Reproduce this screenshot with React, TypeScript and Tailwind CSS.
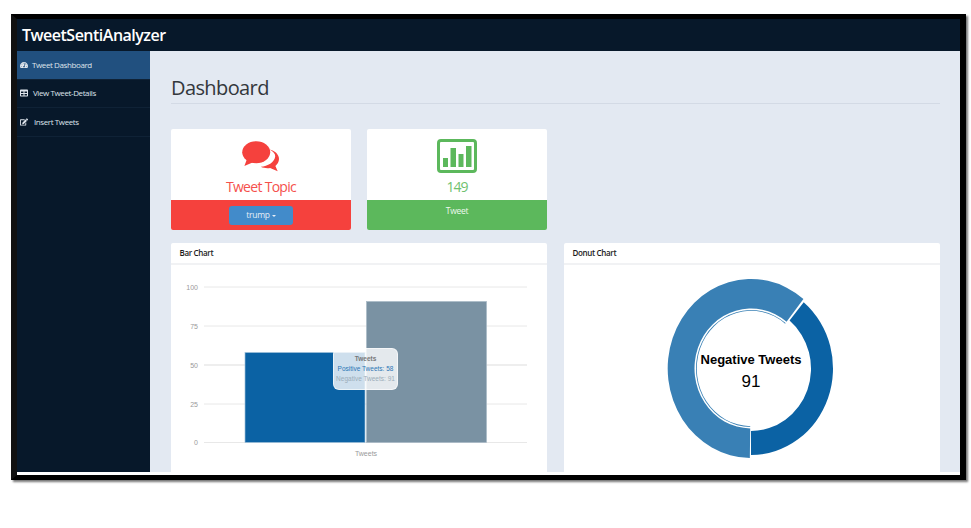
import { FaTachometerAlt, FaTable, FaEdit } from "react-icons/fa";
import { ReactNode } from "react";

// ring segment on an ellipse, angles in degrees clockwise from 12 o'clock
function pt(cx: number, cy: number, rx: number, ry: number, deg: number) {
  const a = (deg * Math.PI) / 180;
  return `${(cx + rx * Math.sin(a)).toFixed(2)} ${(cy - ry * Math.cos(a)).toFixed(2)}`;
}

function ringPath(rxO: number, ryO: number, rxI: number, ryI: number, from: number, to: number) {
  const large = to - from > 180 ? 1 : 0;
  return `M${pt(187, 103.5, rxO, ryO, from)} A${rxO} ${ryO} 0 ${large} 1 ${pt(187, 103.5, rxO, ryO, to)} L${pt(187, 103.5, rxI, ryI, to)} A${rxI} ${ryI} 0 ${large} 0 ${pt(187, 103.5, rxI, ryI, from)} Z`;
}

function NavItem({ icon, label, active, gap }: { icon: ReactNode; label: string; active?: boolean; gap: string }) {
  return (
    <div className={`flex h-[28.5px] items-center border-b border-[#0f2236] pl-[2px] text-[8px] tracking-[-0.4px] text-[#dde3ea] ${gap} ${active ? "bg-[#21507f]" : ""}`}>
      <span className="flex w-[9px] justify-center text-[8px] text-[#dfe5ec]">{icon}</span>
      {label}
    </div>
  );
}

function ChartCard({ title, children }: { title: string; children: ReactNode }) {
  return (
    <div className="h-[229px] w-[376px] overflow-hidden rounded-t-[2px] bg-white">
      <div className="flex h-[22px] items-center border-b-2 border-[#f1f2f4] pl-[8.5px] text-[8px] font-semibold tracking-[-0.35px] text-[#1b1b1b]">
        {title}
      </div>
      {children}
    </div>
  );
}

function BarChart() {
  const rows = [
    { y: 22, label: "100" },
    { y: 61, label: "75" },
    { y: 100, label: "50" },
    { y: 139, label: "25" },
    { y: 177.5, label: "0" },
  ];
  return (
    <div className="relative">
      <svg width="376" height="206" className="block font-['Liberation_Sans',sans-serif]">
        {rows.map((r) => (
          <g key={r.label}>
            <line x1="33" x2="356" y1={r.y} y2={r.y} stroke="#e8e8e8" strokeWidth={r.label === "50" ? 1.6 : 1} />
            <text x="27" y={r.y + 2.5} textAnchor="end" fontSize="7" fill="#9a9a9a">{r.label}</text>
          </g>
        ))}
        <rect x="74" y="87.5" width="120" height="90" fill="#0b62a4" stroke="#9fc0da" strokeWidth="0.7" />
        <rect x="195.5" y="36.5" width="120" height="141" fill="#7a92a3" stroke="#a9bac6" strokeWidth="0.7" />
        <text x="195" y="191" textAnchor="middle" fontSize="7" fill="#9a9a9a">Tweets</text>
      </svg>
      <div className="absolute left-[162px] top-[83px] flex h-[42px] w-[65px] flex-col items-center rounded-[6px] border border-white/60 bg-white/80 pt-[5px] font-['Liberation_Sans',sans-serif] text-[6.5px] leading-[10px]">
        <span className="font-bold text-[#777]">Tweets</span>
        <span className="text-[#2b76b5]">Positive Tweets: 58</span>
        <span className="text-[#9badb9]">Negative Tweets: 91</span>
      </div>
    </div>
  );
}

function DonutChart() {
  return (
    <div className="relative">
      <svg width="376" height="206" className="block">
        <path d={ringPath(82, 86.5, 60, 62.5, 40, 180)} fill="#0b62a4" />
        <path d={ringPath(83.3, 89.5, 56.5, 60, 180.8, 399)} fill="#3980b5" />
        <path d={ringPath(55, 58.5, 54.2, 57.7, 180.8, 399)} fill="#3980b5" />
      </svg>
      <div className="absolute left-[87px] top-[86px] flex w-[200px] flex-col items-center font-['Liberation_Sans',sans-serif] text-black">
        <span className="text-[13px] font-bold leading-[18px]">Negative Tweets</span>
        <span className="text-[17px] leading-[26px]">91</span>
      </div>
    </div>
  );
}

export default function App() {
  return (
    <div className="h-[528px] w-[971px] bg-white pl-[11px] pt-[14px] font-['Open_Sans',sans-serif]">
      <div className="h-[466px] w-[955px] border-y-[5px] border-l-[6px] border-r-[6px] border-black border-l-[#111] bg-white shadow-[2px_2px_2px_#777]">
        <div className="flex h-[32px] items-center bg-[#07182a] pl-[5px] text-[16px] font-semibold tracking-[-0.5px] text-white">
          TweetSentiAnalyzer
        </div>
        <div className="flex h-[421px]">
          <aside className="w-[133px] shrink-0 bg-[#07182a]">
            <NavItem active icon={<FaTachometerAlt />} label="Tweet Dashboard" gap="gap-[4px]" />
            <NavItem icon={<FaTable />} label="View Tweet-Details" gap="gap-[5px]" />
            <NavItem icon={<FaEdit />} label="Insert Tweets" gap="gap-[6px]" />
          </aside>
          <main className="flex-1 overflow-hidden bg-[#e3e9f2] pl-[21px] pr-[20px]">
            <div className="h-[53px] border-b border-[#d3dae5] pt-[22px] text-[20px] leading-[30px] tracking-[-0.6px] text-[#33373c]">
              Dashboard
            </div>
            <div className="mt-[25px] flex gap-[16px]">
              <div className="h-[101px] w-[180px] overflow-hidden rounded-[2px] bg-white">
                <div className="flex h-[71px] flex-col items-center pt-[12px]">
                  <svg width="38" height="31" viewBox="0 0 38 31" className="block">
                    <path d="M27.5 8.5c5 1.2 9.5 4.6 9.5 9.6 0 3-1.6 5.2-3.6 6.9l2.3 5.3-7.6-3.4c-2.2.5-6.5.3-9.3-1.2 7-.6 13.5-4.3 14.4-10.3.3-2.5-2-5-5.7-6.9z" fill="#f5413d" />
                    <ellipse cx="14.2" cy="11.2" rx="14" ry="11" fill="#f5413d" />
                    <path d="M5 18l-2.6 7 9.3-4z" fill="#f5413d" />
                  </svg>
                  <span className="mt-[5px] text-[14px] leading-[20px] tracking-[-0.7px] text-[#f5504c]">Tweet Topic</span>
                </div>
                <div className="flex h-[30px] items-center justify-center bg-[#f5413d]">
                  <span className="flex h-[19px] w-[64px] items-center justify-center gap-[2px] rounded-[3px] bg-[#428bca] text-[8.5px] tracking-[-0.3px] text-[#e6eef6]">
                    trump
                    <span className="mt-[1px] border-x-[2.5px] border-t-[2.5px] border-x-transparent border-t-[#e6eef6]" />
                  </span>
                </div>
              </div>
              <div className="h-[101px] w-[180px] overflow-hidden rounded-[2px] bg-white">
                <div className="flex h-[71px] flex-col items-center pt-[10px]">
                  <svg width="40" height="34" viewBox="0 0 40 34" className="block">
                    <rect x="1.5" y="1.5" width="37" height="31" rx="2.5" fill="none" stroke="#5cb85c" strokeWidth="3" />
                    <rect x="6" y="19" width="5" height="9" fill="#5cb85c" />
                    <rect x="13.5" y="9" width="5.5" height="19" fill="#5cb85c" />
                    <rect x="21.5" y="15" width="5" height="13" fill="#5cb85c" />
                    <rect x="29" y="7" width="5.5" height="21" fill="#5cb85c" />
                  </svg>
                  <span className="mt-[4px] text-[14px] leading-[20px] tracking-[-1px] text-[#6fc16f]">149</span>
                </div>
                <div className="h-[30px] bg-[#5cb85c] pt-[3px] text-center text-[8.5px] leading-[15px] tracking-[-0.3px] text-[#eef8ee]">
                  Tweet
                </div>
              </div>
            </div>
            <div className="mt-[13px] flex gap-[17px]">
              <ChartCard title="Bar Chart">
                <BarChart />
              </ChartCard>
              <ChartCard title="Donut Chart">
                <DonutChart />
              </ChartCard>
            </div>
          </main>
        </div>
      </div>
    </div>
  );
}
